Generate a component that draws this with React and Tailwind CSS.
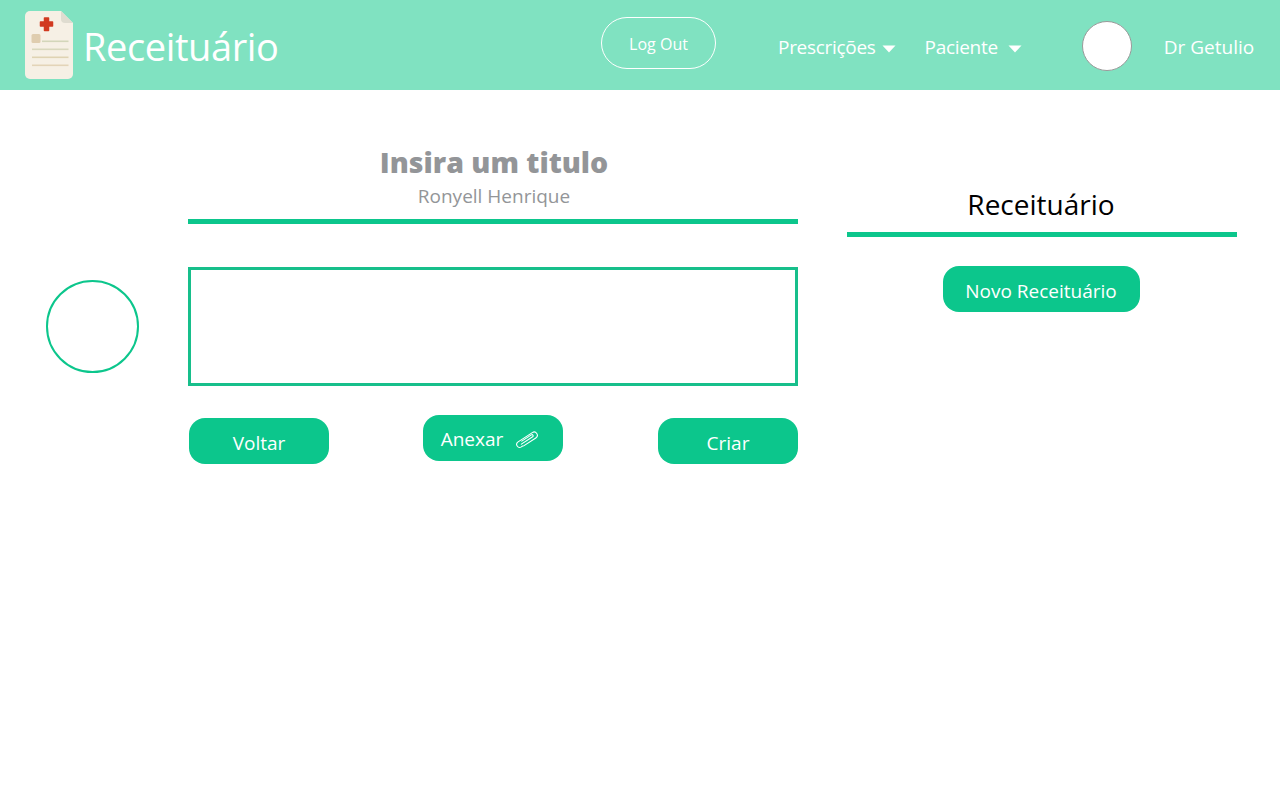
const font = { fontFamily: '"Open Sans", "Noto Sans", sans-serif' };

const Caret = () => (
  <svg viewBox="0 0 14 8" className="w-[14px] h-[8px] fill-white">
    <path d="M0.5 0.5h13L7 7.5z" />
  </svg>
);

const Logo = () => (
  <svg viewBox="0 0 48 68" className="w-[48px] h-[68px] shrink-0">
    <path d="M5 0h31l12 12v51a5 5 0 0 1-5 5H5a5 5 0 0 1-5-5V5a5 5 0 0 1 5-5z" fill="#f6f0e5" />
    <path d="M36 0l12 12h-8a4 4 0 0 1-4-4z" fill="#dfdcd0" />
    <path d="M19.500 7h4v4h4v4h-4v4.500h-4V15h-4v-4h4z" fill="#d13a20" stroke="#d13a20" strokeWidth="1.500" strokeLinejoin="round" />
    <rect x="6.500" y="23" width="9" height="9" rx="1.500" fill="#dfcdaf" />
    <rect x="17" y="29.500" width="26.500" height="1.600" fill="#d3d6ba" />
    <rect x="7" y="37.500" width="36.500" height="1.600" fill="#d9d8bd" />
    <rect x="7" y="45.500" width="36.500" height="1.600" fill="#dfd3b3" />
    <rect x="7" y="53.500" width="36.500" height="1.600" fill="#e3d4b8" />
  </svg>
);

const Clip = () => (
  <svg viewBox="0 0 24 18" className="w-[24px] h-[18px] fill-none stroke-white" strokeWidth="1.100" strokeLinecap="round" strokeLinejoin="round">
    <g transform="rotate(-33 12 9)">
      <path d="M6 11.500h14.500a3.200 3.200 0 0 0 0-6.400H3.500a3 3 0 0 0 0 6h1.500" transform="translate(0 .6)" />
      <path d="M5 9.400h13.500a1.100 1.100 0 0 0 0-2.300H7" />
    </g>
  </svg>
);

const GreenButton = ({ className, children }) => (
  <button className={`h-[46px] bg-[#0cc68c] rounded-[16px] text-white text-[19px] flex items-center justify-center ${className}`}>
    {children}
  </button>
);

export default function App() {
  return (
    <div style={font} className="w-full min-h-[800px] bg-white">
      {/* Header */}
      <header className="h-[90px] bg-[#80e2c1] flex items-center text-white">
        <div className="flex items-center ml-[25px] w-[576px]">
          <Logo />
          <span className="ml-[10px] text-[38px] leading-none tracking-[-0.4px] mt-[2px]">Receituário</span>
        </div>
        <button className="w-[115px] h-[52px] mt-[-4px] pt-[1px] rounded-[26px] border border-white text-[16px] text-white">Log Out</button>
        <div className="flex items-center ml-[62px] mt-[4px] text-[19px] tracking-[-0.3px]">
          <span>Prescrições</span>
          <span className="ml-[6px] mt-[3px]"><Caret /></span>
          <span className="ml-[29px]">Paciente</span>
          <span className="ml-[10px] mt-[3px]"><Caret /></span>
        </div>
        <div className="w-[50px] h-[50px] ml-[60px] mt-[2px] rounded-full bg-white border border-[#999999]" />
        <span className="ml-[32px] mt-[4px] text-[19px]">Dr Getulio</span>
      </header>

      {/* Main */}
      <main className="flex items-start">
        <div className="w-[93px] h-[93px] ml-[46px] mt-[190px] rounded-full border-2 border-[#0cc68c] shrink-0" />

        <section className="w-[610px] ml-[49px] mt-[55px] shrink-0">
          <div className="flex flex-col items-center h-[79px] border-b-[5px] border-[#0cc68c]">
            <h1 className="text-[28.500px] font-extrabold leading-[36px] mt-[-1px] ml-[2px] text-[#939598]">Insira um titulo</h1>
            <p className="text-[19px] leading-[26px] mt-[3px] ml-[2px] text-[#939598]">Ronyell Henrique</p>
          </div>
          <div className="w-[610px] h-[119px] mt-[43px] border-[3px] border-[#17bf8b]" />
          <div className="flex justify-between mt-[29px]">
            <GreenButton className="w-[140px] mt-[3px] ml-[1px] pt-[4px]">Voltar</GreenButton>
            <GreenButton className="w-[140px] gap-[12px] mr-[1px] pt-[3px] pr-[6px]">
              Anexar
              <Clip />
            </GreenButton>
            <GreenButton className="w-[140px] mt-[3px] pt-[4px]">Criar</GreenButton>
          </div>
        </section>

        <aside className="w-[390px] ml-[49px] mt-[90px] shrink-0 flex flex-col items-center">
          <div className="w-full h-[57px] border-b-[5px] border-[#0cc68c] text-center text-black text-[28px] leading-[48px] pr-[2px]">Receituário</div>
          <GreenButton className="w-[197px] mt-[29px] mr-[2px] pt-[4px]">Novo Receituário</GreenButton>
        </aside>
      </main>
    </div>
  );
}
